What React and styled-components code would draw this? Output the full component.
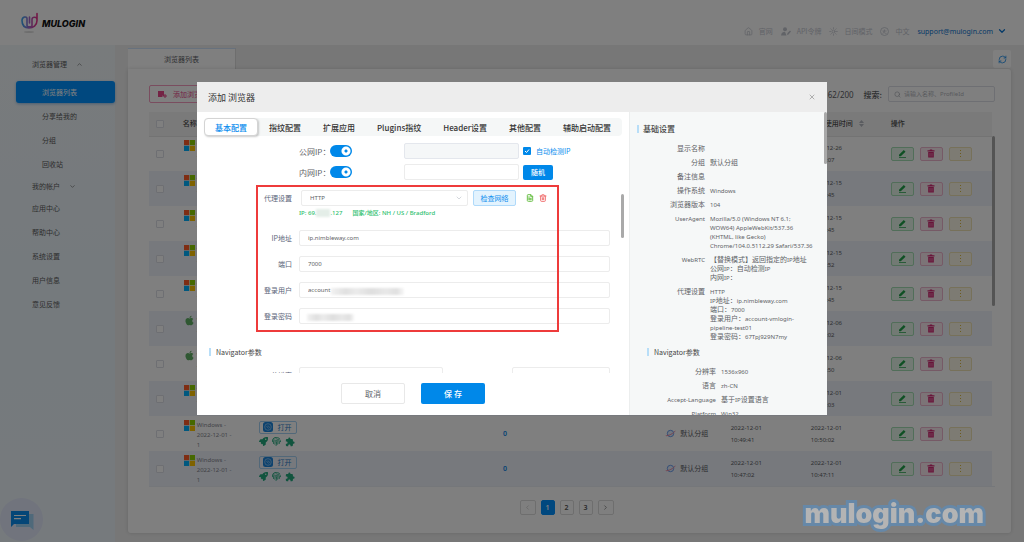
import React, { useState } from "react";
import styled, { createGlobalStyle, css } from "styled-components";
import { FaApple, FaFingerprint, FaRocket } from "react-icons/fa";
import { MdExtension } from "react-icons/md";
import {
  ChevronDown,
  ChevronLeft,
  ChevronRight,
  ChevronUp,
  FileText,
  House,
  RefreshCw,
  Search,
  Sun,
  Trash2,
  X,
} from "lucide-react";

const cjk = `"Noto Sans CJK SC", "Noto Sans", sans-serif`;
const latin = `"Noto Sans", "Noto Sans CJK SC", sans-serif`;

const GlobalStyle = createGlobalStyle`
  * {
    box-sizing: border-box;
  }
  body {
    margin: 0;
    overflow: hidden;
    background: #efefef;
    color: #606266;
    font-family: ${cjk};
    font-size: 7px;
    line-height: 9px;
  }
  button, input, select {
    margin: 0;
    padding: 0;
    font: inherit;
    color: inherit;
    outline: none;
  }
  a {
    color: inherit;
    text-decoration: none;
  }
  svg {
    display: block;
    flex: none;
  }
`;

/* ---------- page ---------- */

const Page = styled.div`
  min-height: 100vh;
  display: flex;
  flex-direction: column;
`;

const Header = styled.header`
  display: flex;
  justify-content: space-between;
  align-items: flex-start;
  height: 45px;
  padding: 12px 17px 0 20px;
  background: #fff;
`;

const Logo = styled.a`
  display: flex;
  align-items: center;
  gap: 3px;
  color: #111;
  font-family: Inter, sans-serif;
  font-size: 9px;
  font-style: italic;
  font-weight: 800;
`;

const TopNav = styled.nav`
  display: flex;
  align-items: center;
  gap: 8px;
  margin-top: 14px;
  color: #c3c6cf;
  a {
    display: flex;
    align-items: center;
    gap: 6px;
  }
`;

const Account = styled.button`
  display: flex;
  align-items: center;
  gap: 4px;
  border: 0;
  background: none;
  color: #0a74d0;
  font-family: ${latin};
`;

const Body = styled.div`
  flex: 1;
  display: flex;
`;

const Sidebar = styled.aside`
  width: 115px;
  padding: 9px 0 0 16px;
  background: linear-gradient(#f1f6f9, #eaf4fb 50%, #edf5fb);
`;

const MenuItem = styled.a`
  display: flex;
  align-items: center;
  gap: 9px;
  height: 24px;
  padding-left: ${(p) => (p.$sub ? 26 : 16)}px;
  color: #5c5c5c;
  ${(p) =>
    p.$group &&
    css`
      height: 20px;
    `}
  ${(p) =>
    p.$active &&
    css`
      height: 22px;
      margin: 7px 0 1px;
      border-radius: 3px;
      background: #0091ff;
      color: #fff;
      box-shadow: 0 1px 3px rgba(0, 100, 200, 0.4);
    `}
`;

const Main = styled.main`
  flex: 1;
  min-width: 0;
  display: flex;
  flex-direction: column;
  padding: 3px 13px 9px;
`;

const TabStrip = styled.div`
  display: flex;
  justify-content: space-between;
  align-items: flex-start;
`;

const PageTab = styled.a`
  display: flex;
  align-items: center;
  justify-content: center;
  width: 108px;
  height: 21px;
  border-top: 1px solid #cfe3fb;
  border-right: 1px solid #dcdcdc;
  background: #fff;
`;

const RefreshButton = styled.button`
  display: grid;
  place-items: center;
  width: 18px;
  height: 18px;
  margin-top: 2px;
  border: 0;
  border-radius: 2px;
  background: #fff;
  color: #0a84e8;
`;

const Card = styled.section`
  flex: 1;
  display: flex;
  flex-direction: column;
  padding: 16px 16px 0 21px;
  border-radius: 0 3px 3px 3px;
  background: #fff;
  box-shadow: 0 0 4px rgba(0, 0, 0, 0.15);
`;

const Toolbar = styled.div`
  display: flex;
  justify-content: space-between;
  align-items: center;
  height: 18px;
`;

const AddButton = styled.button`
  display: flex;
  align-items: center;
  gap: 6px;
  height: 18px;
  padding: 0 8px;
  border: 1px solid #f59abf;
  border-radius: 2px;
  background: #fff;
  color: #e8478a;
`;

const ToolbarRight = styled.div`
  display: flex;
  align-items: center;
  gap: 10px;
  strong {
    font: 400 8px ${latin};
  }
  label {
    display: flex;
    align-items: center;
    gap: 6px;
    font-size: 8px;
    font-weight: 500;
  }
`;

const SearchBox = styled.div`
  display: flex;
  align-items: center;
  gap: 3px;
  width: 107px;
  height: 16px;
  padding: 0 5px;
  border: 1px solid #dcdfe6;
  border-radius: 2px;
  color: #a0a4ac;
  input {
    width: 100%;
    border: 0;
    background: none;
    font-family: ${latin};
    font-size: 6px;
    font-weight: 400;
  }
  input::placeholder {
    color: #b2b5bc;
  }
`;

const TableArea = styled.div`
  display: flex;
  margin-top: 9px;
  border-bottom: 1px solid #ebeef5;
`;

const TableScroll = styled.div`
  width: 3px;
  height: 170px;
  margin-top: 24px;
  border-radius: 2px;
  background: #a8a8a8;
`;

const BrowserTable = styled.table`
  width: 100%;
  table-layout: fixed;
  border-collapse: collapse;
  th {
    height: 24px;
    padding: 0;
    background: #f4f4f4;
    border-bottom: 1px solid #e6e6e6;
    color: #4c4c4c;
    font-weight: 500;
    text-align: left;
    white-space: nowrap;
  }
  td {
    height: 35px;
    padding: 0;
  }
  tbody tr:nth-child(even) {
    background: #eef2fb;
  }
`;

const Check = styled.input.attrs({ type: "checkbox" })`
  appearance: none;
  display: block;
  width: 8px;
  height: 8px;
  margin-left: 7px;
  border: 1px solid #dcdfe6;
  border-radius: 1px;
  background: #fff;
`;

const NameCell = styled.div`
  display: flex;
  gap: 2px;
  height: 34px;
  padding: 3px 0 0 1px;
  color: #85888f;
  font-family: ${latin};
  font-size: 6px;
  line-height: 10px;
  span {
    width: 38px;
  }
`;

const OpenButton = styled.button`
  display: flex;
  align-items: center;
  gap: 5px;
  height: 13px;
  padding: 0 4px 0 3px;
  border: 1px solid #a5d0f2;
  border-radius: 2px;
  background: none;
  color: #2a7cc8;
`;

const MiniIcons = styled.div`
  display: flex;
  gap: 4px;
  margin-top: 3px;
  color: #22a87c;
`;

const Count = styled.span`
  color: #0a84e8;
  font: 600 7px ${latin};
`;

const Group = styled.span`
  display: flex;
  align-items: center;
  gap: 4px;
  padding-left: 2px;
`;

const Stamp = styled.time`
  display: block;
  width: 40px;
  font-family: ${latin};
  font-size: 6px;
  line-height: 12px;
`;

const Sortable = styled.span`
  display: flex;
  align-items: center;
  gap: 6px;
`;

const Actions = styled.div`
  display: flex;
  gap: 6px;
`;

const tones = {
  edit: ["#1fa048", "#a2dcb2", "#e4f4e8"],
  remove: ["#d02873", "#edb4cc", "#f9e8ef"],
  more: ["#d8b840", "#efe2b4", "#faf6e6"],
};

const ActionButton = styled.button`
  display: grid;
  place-items: center;
  width: 23px;
  height: 14px;
  border: 1px solid ${(p) => tones[p.$tone][1]};
  border-radius: 2px;
  background: ${(p) => tones[p.$tone][2]};
  color: ${(p) => tones[p.$tone][0]};
`;

const Pager = styled.nav`
  display: flex;
  justify-content: center;
  gap: 5px;
  margin: 13px 11px 0 0;
`;

const PageButton = styled.button`
  display: grid;
  place-items: center;
  width: ${(p) => (p.$wide ? 16 : 14)}px;
  height: 15px;
  border: 1px solid ${(p) => (p.$on ? "#0091ff" : "#dcdcdc")};
  border-radius: 2px;
  background: ${(p) => (p.$on ? "#0091ff" : "#fff")};
  color: ${(p) => (p.$on ? "#fff" : "#555")};
  font: 600 7px ${latin};
`;

const ChatButton = styled.button`
  position: fixed;
  left: 0;
  bottom: 1px;
  display: grid;
  place-items: center;
  width: 43px;
  height: 43px;
  border: 0;
  border-radius: 50%;
  background: #e2e8fb;
`;

const Watermark = styled.div`
  position: fixed;
  right: 40px;
  bottom: 11px;
  z-index: 3;
  color: #b4b4b4;
  font: 900 27px/34px Inter, sans-serif;
  -webkit-text-stroke: 6px #6688a8;
  paint-order: stroke fill;
`;

/* ---------- dialog ---------- */

const Mask = styled.div`
  position: fixed;
  inset: 0;
  z-index: 2;
  display: flex;
  justify-content: center;
  align-items: flex-start;
  padding-top: 82px;
  background: rgba(0, 0, 0, 0.5);
`;

const Dialog = styled.div`
  width: 630px;
  background: #fff;
  overflow: hidden;
`;

const DialogHead = styled.div`
  display: flex;
  justify-content: space-between;
  align-items: center;
  height: 30px;
  padding: 0 11px;
  background: #ededed;
  h1 {
    margin: 0;
    color: #333;
    font-size: 9px;
    font-weight: 400;
  }
  button {
    border: 0;
    background: none;
    color: #8e8e8e;
  }
`;

const DialogBody = styled.div`
  display: flex;
  max-height: 303px;
`;

const FormPane = styled.div`
  position: relative;
  flex: 1;
  min-width: 0;
  display: flex;
  flex-direction: column;
`;

const Tabs = styled.div`
  display: flex;
  flex: none;
  height: 18px;
  margin: 6px 7px;
  border-radius: 4px;
  background: #f5f7f7;
`;

const Tab = styled.button`
  flex: 1 1 auto;
  border: 1px solid transparent;
  border-radius: 4px;
  background: none;
  color: #333;
  font-size: 8px;
  font-weight: 500;
  white-space: nowrap;
  ${(p) =>
    p.$on &&
    css`
      background: #fff;
      border-color: #d4d4d4;
      box-shadow: 1px 1px 2px rgba(0, 0, 0, 0.2);
      color: #0a8cee;
    `}
`;

const FormScroll = styled.form`
  flex: 1;
  min-height: 0;
  overflow: hidden;
  padding: 1px 19px 0 0;
`;

const FormRow = styled.div`
  display: grid;
  grid-template-columns: 95px 1fr;
  column-gap: 7px;
  align-items: center;
  height: 16px;
  margin-bottom: ${(p) => p.$gap}px;
  > label,
  > span {
    color: #5a6478;
    text-align: right;
  }
`;

const Field = styled.div`
  position: relative;
  display: flex;
  align-items: center;
`;

const SplitField = styled(Field)`
  justify-content: space-between;
`;

const SwitchSlot = styled.label`
  display: flex;
  align-items: center;
  width: 105px;
  font-size: 8px;
`;

const Switch = styled.input.attrs({ type: "checkbox" })`
  appearance: none;
  width: 22px;
  height: 12px;
  border-radius: 6px;
  background: radial-gradient(
    circle at 16px 6px,
    #0088e9 1px,
    #fff 2px,
    #fff 4px,
    #0088e9 5px
  );
`;

const TextInput = styled.input`
  width: ${(p) => (p.$w ? `${p.$w}px` : "100%")};
  height: 16px;
  padding: 0 8px;
  border: 1px solid #ececec;
  border-radius: 2px;
  background: #fff;
  font-family: ${latin};
  font-size: 6px;
  &:disabled {
    background: #f5f7f8;
    border-color: #e4e7ed;
  }
`;

const AutoDetect = styled.label`
  display: flex;
  align-items: center;
  gap: 5px;
  margin-left: 4px;
  color: #0a8cee;
  input {
    appearance: none;
    width: 8px;
    height: 8px;
    border-radius: 1px;
    background: #0088e9;
  }
  svg {
    position: absolute;
    margin-left: 1px;
    color: #fff;
  }
`;

const PrimaryButton = styled.button`
  width: 64px;
  height: 21px;
  border: 0;
  border-radius: 2px;
  background: #0088e9;
  color: #fff;
  font-size: 8px;
  font-weight: 500;
`;

const RandomButton = styled(PrimaryButton)`
  width: 30px;
  height: 15px;
  margin-left: 4px;
  font-size: 7px;
`;

const CancelButton = styled(PrimaryButton)`
  border: 1px solid #e8e8e8;
  background: #fff;
  color: #606266;
  font-weight: 400;
`;

const ProxyBox = styled.fieldset`
  position: relative;
  min-width: 0;
  height: 147px;
  margin: 0;
  padding: 5px 0 0;
  border: 0;
`;

/* highlight frame drawn over the proxy fields */
const Frame = styled.div`
  position: absolute;
  inset: 0 51px 0 59px;
  border: 2px solid #ee3b3b;
  pointer-events: none;
`;

const SelectWrap = styled.div`
  position: relative;
  width: 167px;
  margin: 0 5px 0 2px;
  select {
    appearance: none;
    width: 100%;
    height: 16px;
    padding: 0 8px;
    border: 1px solid #ececec;
    border-radius: 2px;
    background: #fff;
    font-family: ${latin};
    font-size: 6px;
  }
  svg {
    position: absolute;
    top: 4px;
    right: 5px;
    color: #c0c4cc;
  }
`;

const CheckNetwork = styled.button`
  width: 43px;
  height: 16px;
  border: 1px solid #b0dafa;
  border-radius: 2px;
  background: #e3f3fe;
  color: #0a8cee;
`;

const IconButton = styled.button`
  margin-left: ${(p) => p.$space}px;
  border: 0;
  background: none;
  color: ${(p) => p.$color};
`;

const IpInfo = styled.p`
  display: flex;
  gap: 10px;
  margin: 2px 0 12px 102px;
  color: #2cc06e;
  font-family: ${latin};
  font-size: 6px;
  font-weight: 500;
  line-height: 10px;
  span {
    display: flex;
    align-items: center;
  }
`;

const Smudge = styled.i`
  width: 14px;
  height: 8px;
  background: #e4eee8;
  filter: blur(1px);
`;

const Censor = styled.i`
  position: absolute;
  left: ${(p) => p.$left}px;
  display: flex;
  width: ${(p) => p.$width}px;
  height: 7px;
  margin-top: 2px;
  background: linear-gradient(90deg, #f2f2f2, #e0e0e0 20%, #ebebeb 35%, #dedede 55%, #e8e8e8 75%, #e0e0e0 90%, #f8f8f8);
  filter: blur(1px);
`;

const Section = styled.h2`
  display: flex;
  align-items: center;
  gap: ${(p) => p.$gap}px;
  margin: ${(p) => p.$margin};
  color: #444;
  font-size: ${(p) => (p.$main ? 8 : 7)}px;
  font-weight: ${(p) => (p.$main ? 500 : 400)};
  line-height: 10px;
  &::before {
    content: "";
    width: 2px;
    height: 8px;
    background: #b8def8;
  }
`;

const Footer = styled.div`
  display: flex;
  justify-content: center;
  flex: none;
  gap: 16px;
  height: 42px;
  padding-top: 10px;
`;

const Thumb = styled.div`
  position: absolute;
  top: ${(p) => p.$top}px;
  right: ${(p) => p.$right}px;
  width: 3px;
  height: ${(p) => p.$height}px;
  border-radius: 2px;
  background: #a9a9a9;
`;

const Summary = styled.aside`
  position: relative;
  width: 198px;
  overflow: hidden;
  border-left: 1px solid #eceeee;
  background: #f6f8f8;
`;

const Facts = styled.dl`
  display: grid;
  grid-template-columns: ${(p) => p.$label}px 1fr;
  gap: 5px;
  margin: 0;
  padding-right: 10px;
  dt {
    text-align: right;
  }
  dd {
    margin: 0;
    white-space: pre-line;
  }
`;

const Latin = styled.span`
  font-family: ${latin};
  font-size: 6px;
  line-height: 6px;
`;

/* ---------- drawings ---------- */

const LogoMark = () => (
  <svg width="19" height="22" viewBox="0 0 19 22" fill="none">
    <defs>
      <linearGradient id="lg" x1="0" x2="1">
        <stop offset="0" stopColor="#3aa5ef" />
        <stop offset="0.5" stopColor="#a864c8" />
        <stop offset="1" stopColor="#e8308a" />
      </linearGradient>
    </defs>
    <ellipse cx="9" cy="20" rx="5" ry="1" fill="#ddd" />
    <path
      d="M7 13.500V6.500C7 4 2 4.500 2 8.500c0 5 3 7.500 7 7.500s8-2.500 8-7.500V1.500M12 13.500V7.500c0-3 5-3 5 0M7 13.500c0 1.800 5 1.800 5 0M9.500 5v6"
      stroke="url(#lg)"
      strokeWidth="1.600"
      strokeLinecap="round"
      strokeLinejoin="round"
    />
  </svg>
);

const Windows = () => (
  <svg width="11" height="11" viewBox="0 0 11 11">
    <path fill="#ff5a26" d="M0 0h5.200v5.200H0z" />
    <path fill="#8cd000" d="M5.800 0H11v5.200H5.800z" />
    <path fill="#00b0ff" d="M0 5.800h5.200V11H0z" />
    <path fill="#ffc400" d="M5.800 5.800H11V11H5.800z" />
  </svg>
);

const OpenMark = () => (
  <svg width="10" height="10" viewBox="0 0 10 10" fill="none">
    <rect width="10" height="10" rx="2.500" fill="#1a84dc" />
    <circle cx="5" cy="5" r="3.300" stroke="#a8d2f5" strokeWidth="0.700" />
    <path d="M3.500 4l2 2.500M5 3.500l1.800 2.300" stroke="#a8d2f5" strokeWidth="0.700" />
  </svg>
);

const Pencil = () => (
  <svg width="9" height="9" viewBox="0 0 9 9" fill="currentColor">
    <path d="M1 5.700L5.800 1 7.500 2.700 2.800 7.200H1zM1 8h7v.8H1z" />
  </svg>
);

const Bin = () => (
  <svg width="8" height="9" viewBox="0 0 8 9">
    <path
      fill="currentColor"
      d="M.5 1.200h2L3 .4h2l.5.8h2v1.200h-7zM1.200 3h5.600v5.600H1.200z"
    />
    <path stroke="#fbd3e4" strokeWidth="0.500" d="M3 4v3.600M5 4v3.600" />
  </svg>
);

const Dots = () => (
  <svg width="3" height="9" viewBox="0 0 3 9" fill="currentColor">
    <path d="M1 1h1v1H1zM1 4h1v1H1zM1 7h1v1H1z" />
  </svg>
);

const Planet = () => (
  <svg width="11" height="9" viewBox="0 0 11 9" fill="none">
    <circle cx="5.500" cy="4.500" r="3.200" fill="#e3efff" stroke="#6a9cec" strokeWidth="1" />
    <path d="M.8 6.500C2.500 7.500 9.500 4 10.200 1.800" stroke="#e88aa4" strokeWidth="1" />
  </svg>
);

const AddMark = () => (
  <svg width="9" height="8" viewBox="0 0 9 8" fill="currentColor">
    <path d="M0 1h6v4.500H4.500V7H0zM6.500 4h1v1.500H9v1H7.500V8h-1V6.500H5v-1h1.500z" />
  </svg>
);

const Token = () => (
  <svg width="10" height="9" viewBox="0 0 10 9" fill="currentColor">
    <circle cx="4" cy="2.300" r="2" />
    <path d="M0 8.500C.5 5.500 2 4.800 4 4.800l1.500 3.700zM6 8l.5-2L9 3.500l1 1L7.500 7.500z" />
  </svg>
);

const Lang = () => (
  <svg width="9" height="9" viewBox="0 0 9 9" fill="none" stroke="currentColor">
    <circle cx="4.500" cy="4.500" r="4" strokeWidth="0.800" />
    <path d="M2.500 4h4M4.500 2.500V4c0 1-1 2-2 2.500M3.500 4.500c.5 1 1.500 2 3 2" strokeWidth="0.700" />
  </svg>
);

const Sorter = () => (
  <svg width="5" height="7" viewBox="0 0 5 7" fill="#b4b8c0">
    <path d="M2.500 0L5 3H0zM2.500 7L0 4h5z" />
  </svg>
);

const ChatMark = () => (
  <svg width="24" height="20" viewBox="0 0 24 20">
    <path fill="#9fd2f5" d="M6 4h17.500v16L20 17H6z" />
    <path fill="#0a8cee" d="M1 1h18v13H4l-3 3z" />
    <path stroke="#fff" strokeWidth="1.200" d="M4 5.500h12M4 8.700h7" />
  </svg>
);

/* ---------- data ---------- */

const rows = [
  { os: "win", created: "2022-12-15 10:21:33", used: "2022-12-26 15:02:07" },
  { os: "win", created: "2022-12-15 10:21:30", used: "2022-12-15 10:31:45" },
  { os: "win", created: "2022-12-15 10:21:28", used: "2022-12-15 10:30:45" },
  { os: "win", created: "2022-12-15 10:21:25", used: "2022-12-15 10:28:52" },
  { os: "win", created: "2022-12-15 10:21:21", used: "2022-12-15 10:26:45" },
  { os: "mac", created: "2022-12-06 16:10:11", used: "2022-12-06 16:22:02" },
  { os: "mac", created: "2022-12-06 16:09:40", used: "2022-12-06 16:14:50" },
  { os: "win", created: "2022-12-01 10:50:25", used: "2022-12-01 10:55:03" },
  { os: "win", created: "2022-12-01 10:49:41", used: "2022-12-01 10:50:02" },
  { os: "win", created: "2022-12-01 10:47:02", used: "2022-12-01 10:47:11" },
];

const tabs = [
  "基本配置",
  "指纹配置",
  "扩展应用",
  "Plugins指纹",
  "Header设置",
  "其他配置",
  "辅助启动配置",
];

const widths = ["4%", "9%", "29%", "19%", "8%", "9.5%", "9.5%", "12%"];

const facts = [
  ["显示名称", ""],
  ["分组", "默认分组"],
  ["备注信息", ""],
  ["操作系统", <Latin>Windows</Latin>],
  ["浏览器版本", <Latin>104</Latin>],
  [
    <Latin>UserAgent</Latin>,
    <Latin>
      {"Mozilla/5.0 (Windows NT 6.1;\nWOW64) AppleWebKit/537.36\n(KHTML, like Gecko)\nChrome/104.0.5112.29 Safari/537.36"}
    </Latin>,
  ],
  [
    <Latin>WebRTC</Latin>,
    <>
      【替换模式】返回指定的<Latin>IP</Latin>地址{"\n"}公网<Latin>IP</Latin>
      ：自动检测<Latin>IP</Latin>
      {"\n"}内网<Latin>IP</Latin>：
    </>,
  ],
  [
    "代理设置",
    <>
      <Latin>HTTP</Latin>
      {"\n"}
      <Latin>IP</Latin>地址：<Latin>ip.nimbleway.com</Latin>
      {"\n"}端口：<Latin>7000</Latin>
      {"\n"}登录用户：<Latin>{"account-vmlogin-\npipeline-test01\n"}</Latin>
      登录密码：<Latin>67Tpj929N7my</Latin>
    </>,
  ],
];

const navigatorFacts = [
  ["分辨率", <Latin>1536x960</Latin>],
  ["语言", <Latin>zh-CN</Latin>],
  [
    <Latin>Accept-Language</Latin>,
    <>
      基于<Latin>IP</Latin>设置语言
    </>,
  ],
  [<Latin>Platform</Latin>, <Latin>Win32</Latin>],
];

const FactList = ({ items, label }) => (
  <Facts $label={label}>
    {items.map(([name, value], i) => (
      <React.Fragment key={i}>
        <dt>{name}</dt>
        <dd>{value}</dd>
      </React.Fragment>
    ))}
  </Facts>
);

const BrowserList = () => (
  <TableArea>
    <BrowserTable>
      <colgroup>
        {widths.map((w, i) => (
          <col key={i} style={{ width: w }} />
        ))}
      </colgroup>
      <thead>
        <tr>
          <th>
            <Check aria-label="全选" />
          </th>
          <th>名称</th>
          <th></th>
          <th></th>
          <th>分组</th>
          <th>创建时间</th>
          <th>
            <Sortable>
              最后使用时间 <Sorter />
            </Sortable>
          </th>
          <th>操作</th>
        </tr>
      </thead>
      <tbody>
        {rows.map((row, i) => (
          <tr key={i}>
            <td>
              <Check aria-label="选择" />
            </td>
            <td>
              <NameCell>
                {row.os === "win" ? <Windows /> : <FaApple size={11} color="#5fae64" />}
                <span>Windows - 2022-12-01 - 1</span>
              </NameCell>
            </td>
            <td>
              <OpenButton>
                <OpenMark /> 打开
              </OpenButton>
              <MiniIcons>
                <FaRocket size={9} />
                <FaFingerprint size={9} />
                <MdExtension size={10} />
              </MiniIcons>
            </td>
            <td>
              <Count>0</Count>
            </td>
            <td>
              <Group>
                <Planet /> 默认分组
              </Group>
            </td>
            <td>
              <Stamp>{row.created}</Stamp>
            </td>
            <td>
              <Stamp>{row.used}</Stamp>
            </td>
            <td>
              <Actions>
                <ActionButton $tone="edit" aria-label="编辑">
                  <Pencil />
                </ActionButton>
                <ActionButton $tone="remove" aria-label="删除">
                  <Bin />
                </ActionButton>
                <ActionButton $tone="more" aria-label="更多">
                  <Dots />
                </ActionButton>
              </Actions>
            </td>
          </tr>
        ))}
      </tbody>
    </BrowserTable>
    <TableScroll />
  </TableArea>
);

const AddBrowserDialog = () => {
  const [tab, setTab] = useState(0);
  return (
    <Mask>
      <Dialog role="dialog">
        <DialogHead>
          <h1>添加 浏览器</h1>
          <button aria-label="关闭">
            <X size={8} strokeWidth={2} />
          </button>
        </DialogHead>
        <DialogBody>
          <FormPane>
            <Tabs>
              {tabs.map((name, i) => (
                <Tab key={name} $on={i === tab} onClick={() => setTab(i)}>
                  {name}
                </Tab>
              ))}
            </Tabs>
            <FormScroll>
              <FormRow $gap={5}>
                <span />
                <Field>
                  <SwitchSlot>
                    公网IP： <Switch defaultChecked />
                  </SwitchSlot>
                  <TextInput $w={115} disabled aria-label="公网IP" />
                  <AutoDetect>
                    <input type="checkbox" defaultChecked />
                    <svg width="6" height="6" viewBox="0 0 6 6" fill="none">
                      <path d="M1 3l1.500 1.500L5 1.500" stroke="currentColor" />
                    </svg>
                    自动检测IP
                  </AutoDetect>
                </Field>
              </FormRow>
              <FormRow $gap={5}>
                <span />
                <Field>
                  <SwitchSlot>
                    内网IP： <Switch defaultChecked />
                  </SwitchSlot>
                  <TextInput $w={115} aria-label="内网IP" />
                  <RandomButton type="button">随机</RandomButton>
                </Field>
              </FormRow>
              <ProxyBox>
                <FormRow $gap={2}>
                  <label htmlFor="proxy">代理设置</label>
                  <Field>
                    <SelectWrap>
                      <select id="proxy">
                        <option>HTTP</option>
                      </select>
                      <ChevronDown size={8} />
                    </SelectWrap>
                    <CheckNetwork type="button">检查网络</CheckNetwork>
                    <IconButton type="button" $space={10} $color="#6cc04a" aria-label="复制">
                      <FileText size={8} strokeWidth={3} />
                    </IconButton>
                    <IconButton type="button" $space={5} $color="#f07070" aria-label="清除">
                      <Trash2 size={8} strokeWidth={3} />
                    </IconButton>
                  </Field>
                </FormRow>
                <IpInfo>
                  <span>
                    IP: 69.
                    <Smudge />
                    .127
                  </span>
                  <span>国家/地区: NH / US / Bradford</span>
                </IpInfo>
                <FormRow $gap={10}>
                  <label htmlFor="host">IP地址</label>
                  <TextInput id="host" defaultValue="ip.nimbleway.com" />
                </FormRow>
                <FormRow $gap={10}>
                  <label htmlFor="port">端口</label>
                  <TextInput id="port" defaultValue="7000" />
                </FormRow>
                <FormRow $gap={10}>
                  <label htmlFor="user">登录用户</label>
                  <Field>
                    <TextInput id="user" defaultValue="account" />
                    <Censor $left={32} $width={73} />
                  </Field>
                </FormRow>
                <FormRow $gap={10}>
                  <label htmlFor="pass">登录密码</label>
                  <Field>
                    <TextInput id="pass" />
                    <Censor $left={8} $width={47} />
                  </Field>
                </FormRow>
                <Frame />
              </ProxyBox>
              <Section $gap={5} $margin="15px 0 10px 12px">
                Navigator参数
              </Section>
              <FormRow $gap={0}>
                <label htmlFor="res">分辨率</label>
                <SplitField>
                  <TextInput id="res" $w={144} />
                  <TextInput aria-label="语言" $w={98} />
                </SplitField>
              </FormRow>
            </FormScroll>
            <Footer>
              <CancelButton type="button">取消</CancelButton>
              <PrimaryButton type="button">保 存</PrimaryButton>
            </Footer>
            <Thumb $top={82} $right={5} $height={44} />
          </FormPane>
          <Summary>
            <Section $main $gap={4} $margin="12px 0 10px 7px">
              基础设置
            </Section>
            <FactList items={facts} label={75} />
            <Section $gap={5} $margin="6px 0 10px 17px">
              Navigator参数
            </Section>
            <FactList items={navigatorFacts} label={86} />
            <Thumb $top={0} $right={0} $height={52} />
          </Summary>
        </DialogBody>
      </Dialog>
    </Mask>
  );
};

const App = () => {
  return (
    <>
      <GlobalStyle />
      <Page>
        <Header>
          <Logo href="#">
            <LogoMark /> MULOGIN
          </Logo>
          <TopNav>
            <a href="#">
              <House size={9} /> 官网
            </a>
            <a href="#">
              <Token /> API令牌
            </a>
            <a href="#">
              <Sun size={9} /> 日间模式
            </a>
            <a href="#">
              <Lang /> 中文
            </a>
            <Account>
              support@mulogin.com <ChevronDown size={10} strokeWidth={3} />
            </Account>
          </TopNav>
        </Header>
        <Body>
          <Sidebar>
            <MenuItem href="#" $group>
              浏览器管理 <ChevronUp size={7} />
            </MenuItem>
            <MenuItem href="#" $sub $active>
              浏览器列表
            </MenuItem>
            <MenuItem href="#" $sub>
              分享给我的
            </MenuItem>
            <MenuItem href="#" $sub>
              分组
            </MenuItem>
            <MenuItem href="#" $sub>
              回收站
            </MenuItem>
            <MenuItem href="#" $group>
              我的帐户 <ChevronDown size={7} />
            </MenuItem>
            <MenuItem href="#">应用中心</MenuItem>
            <MenuItem href="#">帮助中心</MenuItem>
            <MenuItem href="#">系统设置</MenuItem>
            <MenuItem href="#">用户信息</MenuItem>
            <MenuItem href="#">意见反馈</MenuItem>
          </Sidebar>
          <Main>
            <TabStrip>
              <PageTab href="#">浏览器列表</PageTab>
              <RefreshButton aria-label="刷新">
                <RefreshCw size={9} />
              </RefreshButton>
            </TabStrip>
            <Card>
              <Toolbar>
                <AddButton>
                  <AddMark /> 添加浏览器
                </AddButton>
                <ToolbarRight>
                  <strong>62/200</strong>
                  <label>
                    搜索:
                    <SearchBox>
                      <Search size={7} />
                      <input placeholder="请输入名称、ProfileId" />
                    </SearchBox>
                  </label>
                </ToolbarRight>
              </Toolbar>
              <BrowserList />
              <Pager>
                <PageButton $wide aria-label="上一页">
                  <ChevronLeft size={7} color="#bbb" />
                </PageButton>
                <PageButton $on>1</PageButton>
                <PageButton>2</PageButton>
                <PageButton>3</PageButton>
                <PageButton $wide aria-label="下一页">
                  <ChevronRight size={7} />
                </PageButton>
              </Pager>
            </Card>
          </Main>
        </Body>
        <ChatButton aria-label="客服">
          <ChatMark />
        </ChatButton>
      </Page>
      <AddBrowserDialog />
      <Watermark>mulogin.com</Watermark>
    </>
  );
};

export default App;
